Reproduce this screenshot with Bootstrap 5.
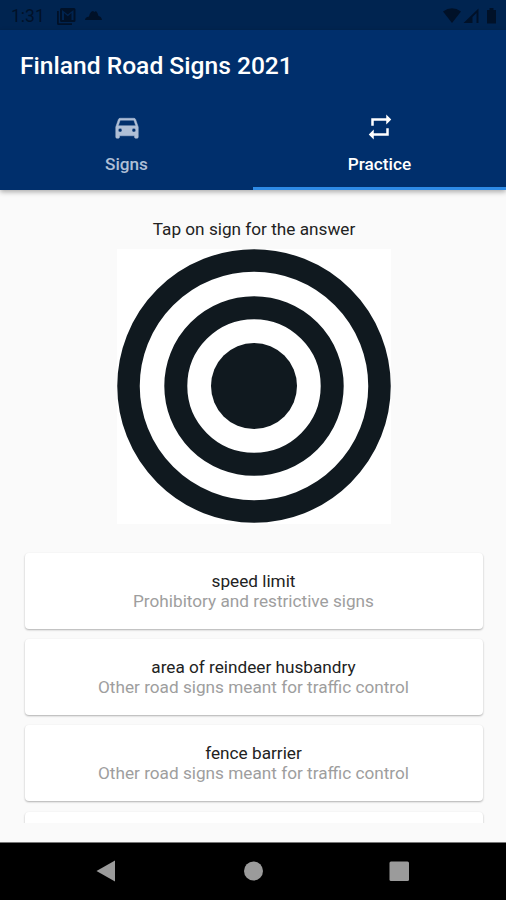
<!DOCTYPE html>
<html lang="en">
<head>
<meta charset="utf-8">
<meta name="viewport" content="width=device-width, initial-scale=1">
<title>Finland Road Signs 2021</title>
<link href="https://cdn.jsdelivr.net/npm/bootstrap@5.3.0/dist/css/bootstrap.min.css" rel="stylesheet">
<style>
  body { font-family: Roboto, "Liberation Sans", sans-serif; background: #fafafa; height: 900px; font-size: 17.2px; line-height: 20px; color: #222; }
  svg { display: block; }
  .status-bar { height: 30px; background: #002450; color: #001128; font-size: 17.5px; padding: 1px 9px 0 11px; }
  .status-left { margin-left: 12px; }
  .app-header { background: #002f6c; height: 160px; box-shadow: 0 2px 5px rgba(0,0,0,.32); z-index: 1; }
  .app-title { height: 71px; padding-left: 20px; font-size: 24.6px; font-weight: 500; line-height: 71px; color: #fff; }
  .app-tabs { height: 89px; }
  .app-tabs .nav-link { height: 89px; padding: 11px 0 0; color: #afbfd6; font-size: 17.2px; font-weight: 500; border-radius: 0; border-bottom: 3px solid transparent; }
  .app-tabs .nav-link.active { color: #fff; border-bottom-color: #2e8be6; }
  .app-tabs svg { margin-bottom: 12px; }
  .quiz { padding: 29px 23px 0 25px; }
  .hint { margin-bottom: 10px; }
  .sign-panel { width: 274px; height: 275px; background: #fff; }
  .answers { margin-top: 26px; height: 273px; gap: 10.2px; overflow: hidden; margin-inline: -3px; padding: 3px 3px 0; }
  .answer { flex: 0 0 76px; height: 76px; border: 0; border-radius: 4px; background: #fff; padding: 18px 1px 0 0; box-shadow: 0 1px 2px rgba(0,0,0,.3); }
  .answer small { font-size: inherit; color: #9e9e9e; }
  .system-nav { height: 58px; background: #000; border-top: 1px solid #777; }
</style>
</head>
<body class="d-flex flex-column overflow-hidden">
<div class="status-bar d-flex align-items-center flex-shrink-0">
  <span>1:31</span>
  <svg class="status-left" width="48" height="18" viewBox="0 0 48 18" fill="currentColor">
    <path d="M0 4h1.800v12.200H15V18H1.500Q0 18 0 16.500z"/>
    <path fill-rule="evenodd" d="M4.500 1H17q1.500 0 1.500 1.500v11q0 1.500-1.500 1.500H4.500Q3 15 3 13.500v-11Q3 1 4.500 1zM5 3v10h2V6l3.800 3.200L14.500 6v7h2V3l-5.700 4.500z"/>
    <path d="M28 13q0-3 4-3.500 1-5 4-5.500l1.500 1L39 4q2 2 2.500 5 3 .5 3.500 4z"/>
  </svg>
  <svg class="ms-auto" width="54" height="18" viewBox="0 0 54 18" fill="currentColor">
    <path d="M0 4.500q9-6.500 18 0L9 16z"/>
    <path d="M20.500 16 35.500 1.500V16h-2V6l-4 4v6z"/>
    <path d="M44 3h2.500V1h4v2H53v13.500h-9z"/>
  </svg>
</div>
<header class="app-header position-relative flex-shrink-0">
  <h1 class="app-title m-0">Finland Road Signs 2021</h1>
  <nav class="app-tabs nav nav-fill flex-nowrap">
    <a class="nav-link w-50 d-flex flex-column align-items-center" href="#">
      <svg width="30" height="30" viewBox="0 0 24 24" fill="currentColor" stroke="currentColor" stroke-width=".4"><path d="M18.920 6.010C18.720 5.420 18.160 5 17.500 5h-11c-.66 0-1.210.42-1.420 1.010L3 12v8c0 .55.45 1 1 1h1c.55 0 1-.45 1-1v-1h12v1c0 .55.45 1 1 1h1c.55 0 1-.45 1-1v-8l-2.080-5.990zM6.500 16c-.83 0-1.500-.67-1.500-1.500S5.670 13 6.500 13s1.500.67 1.500 1.500S7.330 16 6.500 16zm11 0c-.83 0-1.500-.67-1.500-1.500s.67-1.500 1.500-1.500 1.500.67 1.500 1.500-.67 1.500-1.500 1.500zM5 11l1.500-4.500h11L19 11H5z"/></svg>
      <span>Signs</span>
    </a>
    <a class="nav-link active w-50 d-flex flex-column align-items-center" href="#">
      <svg width="30" height="30" viewBox="0 0 24 24" fill="currentColor"><path d="M7 7h10v3l4-4-4-4v3H5v6h2V7zm10 10H7v-3l-4 4 4 4v-3h12v-6h-2v4z"/></svg>
      <span>Practice</span>
    </a>
  </nav>
</header>
<main class="quiz d-flex flex-column text-center flex-grow-1">
  <p class="hint">Tap on sign for the answer</p>
  <div class="sign-panel mx-auto">
    <svg width="274" height="275" viewBox="0 0 274 275" fill="none" stroke="#10191f">
      <circle cx="137" cy="137" r="125.500" stroke-width="22.500"/>
      <circle cx="137" cy="137" r="78.200" stroke-width="23"/>
      <circle cx="137" cy="137" r="43" fill="#10191f" stroke="none"/>
    </svg>
  </div>
  <div class="answers d-flex flex-column">
    <div class="answer card">speed limit<small>Prohibitory and restrictive signs</small></div>
    <div class="answer card">area of reindeer husbandry<small>Other road signs meant for traffic control</small></div>
    <div class="answer card">fence barrier<small>Other road signs meant for traffic control</small></div>
    <div class="answer card"></div>
  </div>
</main>
<footer class="system-nav flex-shrink-0">
  <svg width="506" height="57" viewBox="0 0 506 57" fill="#9b9b9b"><path d="M96.500 28 115 17.500v21z"/><circle cx="253.500" cy="28" r="9.500"/><rect x="389.500" y="18.500" width="19.500" height="19.500" rx="1.500"/></svg>
</footer>
<script src="https://cdn.jsdelivr.net/npm/bootstrap@5.3.0/dist/js/bootstrap.bundle.min.js"></script>
</body>
</html>
